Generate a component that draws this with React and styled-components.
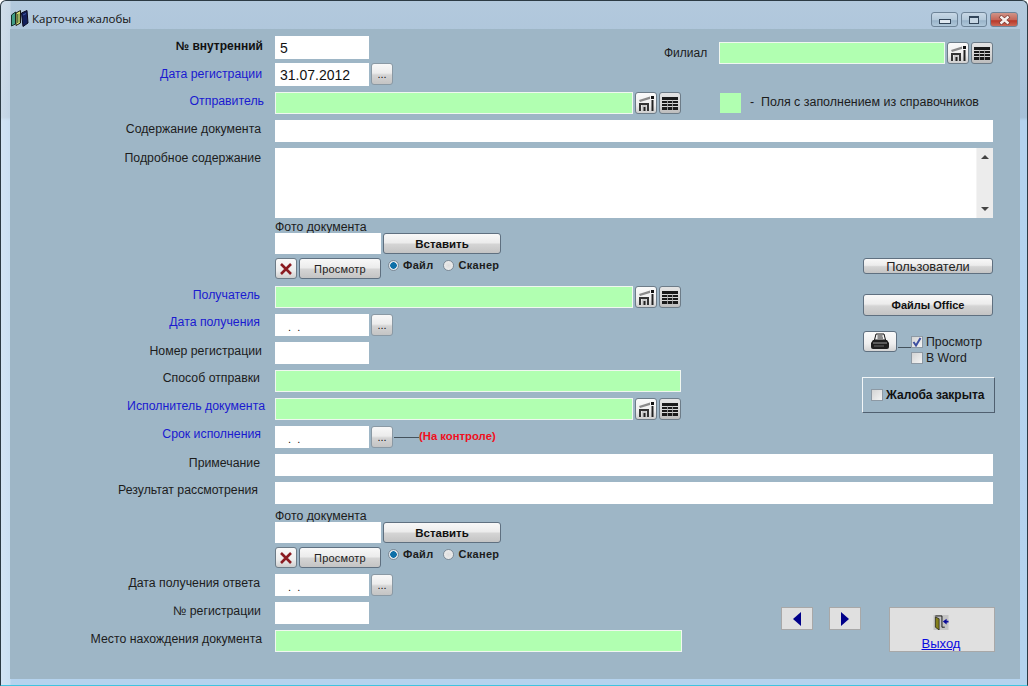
import React from "react";
import styled, { createGlobalStyle } from "styled-components";

const GlobalStyle = createGlobalStyle`
  html, body {
    margin: 0;
    padding: 0;
    background: #ffffff;
    font-family: "Liberation Sans", Arial, sans-serif;
  }
`;

const BookIcon = () => (
  <svg width="18" height="17" viewBox="0 0 18 17">
    <path d="M0.5 5 L4.5 2 L4.5 14 L0.5 16 Z" fill="#3f9c86" stroke="#14302a" strokeWidth="1" />
    <path d="M5 3 L9.5 0.5 L9.5 13 L5 15.5 Z" fill="#dfe67a" stroke="#1a1a10" strokeWidth="1" />
    <path d="M6.5 4 V13 M8 3.5 V12.5" stroke="#4a6a3a" strokeWidth="0.9" />
    <path d="M10.5 3 L16 0.5 L17 13 L12 16.5 Z" fill="#14205c" stroke="#0a0a20" strokeWidth="1" />
    <path d="M12 5 L15 3.5" stroke="#3f5aa8" strokeWidth="1" />
  </svg>
);

const HandbookIcon = () => (
  <svg width="18" height="18" viewBox="0 0 18 18">
    <path d="M2 6 L13 2.5 V5 L3 8 Z" fill="#8a8a8a" />
    <path d="M14 2 H17 V5 H14 Z" fill="#111" />
    <path d="M14.5 6 H16.5 V17 H14.5 Z" fill="#222" />
    <path d="M2 9 H12 V17 H10 V11 H4 V17 H2 Z" fill="#333" />
    <path d="M5 11 H9.5 V17 H5 Z" fill="#c8c8c8" />
    <path d="M6.5 13 H8.5 V17 H6.5 Z" fill="#222" />
  </svg>
);

const TableIcon = () => (
  <svg width="16" height="13" viewBox="0 0 16 13">
    <rect x="0" y="0" width="16" height="13" fill="#1a1a1a" />
    <path d="M0 3.5 H16 M0 6.5 H16 M0 9.5 H16" stroke="#d8d8d8" strokeWidth="1" />
    <path d="M5.5 3 V13 M10.5 3 V13" stroke="#b0b0b0" strokeWidth="0.8" />
  </svg>
);

const PrinterIcon = () => (
  <svg width="20" height="17" viewBox="0 0 20 17">
    <path d="M6 1 H14 L15.5 7 H4.5 Z" fill="#f4f4f4" stroke="#111" strokeWidth="1" />
    <path d="M7.5 3 H12.5 M7.5 5 H13" stroke="#222" strokeWidth="1" />
    <path d="M3 7 H17 L19 10 V14 Q19 16 17 16 H3 Q1 16 1 14 V10 Z" fill="#1e1e1e" />
    <path d="M3 10 H17" stroke="#999" strokeWidth="1" />
    <path d="M4 13 H14" stroke="#666" strokeWidth="1" />
  </svg>
);

const CloseCrossIcon = () => (
  <svg width="14" height="14" viewBox="0 0 14 14">
    <path d="M2 2 L12 12 M12 2 L2 12" stroke="#8b1c22" strokeWidth="2.6" />
  </svg>
);

const WindowCloseIcon = () => (
  <svg width="15" height="10" viewBox="0 0 15 10">
    <path d="M3 1 L12 9 M12 1 L3 9" stroke="#7a3a34" strokeWidth="3.8" />
    <path d="M3.5 1.5 L11.5 8.5 M11.5 1.5 L3.5 8.5" stroke="#f6f0ee" strokeWidth="2.4" />
  </svg>
);

const ExitIcon = () => (
  <svg width="16" height="16" viewBox="0 0 16 16">
    <rect x="0" y="0" width="16" height="16" fill="#c4c4c4" />
    <path d="M2 1 H9 V13 H12" fill="none" stroke="#111" strokeWidth="1" />
    <path d="M2 2 L6 4 V16 L2 13 Z" fill="#85801c" stroke="#111" strokeWidth="0.7" />
    <path d="M10 7 L14 4 V6 H16 V8 H14 V10 Z" fill="#0a0a9a" />
  </svg>
);

const CheckMark = () => (
  <svg width="10" height="10" viewBox="0 0 10 10">
    <path d="M1.5 5 L4 8.5 L8.5 1" fill="none" stroke="#3d4fa0" strokeWidth="2" />
  </svg>
);

const PhotoDoc = () => (
  <PhotoBlock>
    <PhotoCaption>Фото документа</PhotoCaption>
    <PhotoRow>
      <PhotoField />
      <InsertButton>Вставить</InsertButton>
    </PhotoRow>
    <PhotoRow $mt={4}>
      <IconButton $w={22} $h={21}>
        <CloseCrossIcon />
      </IconButton>
      <ViewButton>Просмотр</ViewButton>
      <RadioGroup>
        <Radio $on />
        <RadioText>Файл</RadioText>
        <Radio $ml={10} />
        <RadioText>Сканер</RadioText>
      </RadioGroup>
    </PhotoRow>
  </PhotoBlock>
);

const RefButtons = () => (
  <>
    <IconButton $ml={2}>
      <HandbookIcon />
    </IconButton>
    <IconButton $ml={2} $grey>
      <TableIcon />
    </IconButton>
  </>
);

const App = () => {
  return (
    <>
      <GlobalStyle />
      <Window>
        <TitleBar>
          <TitleLeft>
            <BookIcon />
            <TitleText>Карточка жалобы</TitleText>
          </TitleLeft>
          <Controls>
            <CtrlButton $w={27}>
              <MinGlyph />
            </CtrlButton>
            <CtrlButton $w={26}>
              <MaxGlyph />
            </CtrlButton>
            <CtrlButton $w={28} $close>
              <WindowCloseIcon />
            </CtrlButton>
          </Controls>
        </TitleBar>

        <Body>
          <TopBlock>
            <div>
              <Row $h={23}>
                <Label $bold $pr={12} $top={3}>
                  № внутренний
                </Label>
                <Field $w={94}>5</Field>
              </Row>
              <Row $h={23} $mt={4}>
                <Label $blue $pr={13} $top={4}>
                  Дата регистрации
                </Label>
                <Field $w={94}>31.07.2012</Field>
                <DotsButton>...</DotsButton>
              </Row>
            </div>
            <FilialRow>
              <FilialLabel>Филиал</FilialLabel>
              <Field $w={226} $green />
              <RefButtons />
            </FilialRow>
          </TopBlock>

          <Row $mt={6}>
            <Label $blue $pr={11}>
              Отправитель
            </Label>
            <Field $w={358} $green />
            <RefButtons />
            <LegendBox />
            <LegendText>-&nbsp; Поля с заполнением из справочников</LegendText>
          </Row>

          <Row $mt={6}>
            <Label $pr={14}>Содержание документа</Label>
            <Field $w={718} />
          </Row>

          <Row $h={70} $mt={6}>
            <Label $pr={14} $top={3}>
              Подробное содержание
            </Label>
            <TextArea>
              <ScrollBar>
                <ArrowUp />
                <ArrowDown />
              </ScrollBar>
            </TextArea>
          </Row>

          <MiddleBlock>
            <LeftColumn>
              <PhotoDoc />
              <Row $mt={7}>
                <Label $blue $pr={15}>
                  Получатель
                </Label>
                <Field $w={358} $green />
                <RefButtons />
              </Row>
              <Row $mt={6}>
                <Label $blue $pr={15} $top={1}>
                  Дата получения
                </Label>
                <DateField $w={94}>. &nbsp;.</DateField>
                <DotsButton>...</DotsButton>
              </Row>
              <Row $mt={6}>
                <Label $pr={13}>Номер регистрации</Label>
                <Field $w={94} />
              </Row>
              <Row $mt={6}>
                <Label $pr={15} $top={1}>
                  Способ отправки
                </Label>
                <Field $w={406} $green />
              </Row>
              <Row $mt={6}>
                <Label $blue $pr={10} $top={1}>
                  Исполнитель документа
                </Label>
                <Field $w={358} $green />
                <RefButtons />
              </Row>
              <Row $mt={6}>
                <Label $blue $pr={14} $top={1}>
                  Срок исполнения
                </Label>
                <DateField $w={94}>. &nbsp;.</DateField>
                <DotsButton>...</DotsButton>
                <ControlLine />
                <ControlNote>(На контроле)</ControlNote>
              </Row>
            </LeftColumn>

            <SideColumn>
              <UsersButton>Пользователи</UsersButton>
              <OfficeButton>Файлы Office</OfficeButton>
              <PrintRow>
                <PrintButton>
                  <PrinterIcon />
                </PrintButton>
                <ControlLine $w={13} />
                <CheckList>
                  <CheckRow>
                    <CheckBox $on>
                      <CheckMark />
                    </CheckBox>
                    Просмотр
                  </CheckRow>
                  <CheckRow>
                    <CheckBox />В Word
                  </CheckRow>
                </CheckList>
              </PrintRow>
              <ClosedBox>
                <CheckBox />
                <ClosedText>Жалоба закрыта</ClosedText>
              </ClosedBox>
            </SideColumn>
          </MiddleBlock>

          <Row $mt={6}>
            <Label $pr={15}>Примечание</Label>
            <Field $w={718} />
          </Row>
          <Row $mt={6}>
            <Label $pr={17} $top={1}>
              Результат рассмотрения
            </Label>
            <Field $w={718} />
          </Row>

          <BottomBlock>
            <LeftColumn>
              <PhotoDoc />
              <Row $mt={6}>
                <Label $pr={15}>Дата получения ответа</Label>
                <DateField $w={94}>. &nbsp;.</DateField>
                <DotsButton>...</DotsButton>
              </Row>
              <Row $mt={6}>
                <Label $pr={14}>№ регистрации</Label>
                <Field $w={94} />
              </Row>
              <Row $mt={6}>
                <Label $pr={13}>Место нахождения документа</Label>
                <Field $w={407} $green />
              </Row>
            </LeftColumn>
            <NavColumn>
              <NavButton>
                <ArrowLeft />
              </NavButton>
              <NavButton>
                <ArrowRight />
              </NavButton>
              <ExitButton>
                <ExitIcon />
                <ExitText>Выход</ExitText>
              </ExitButton>
            </NavColumn>
          </BottomBlock>
        </Body>
      </Window>
    </>
  );
};

export default App;

const Window = styled.div`
  width: 1028px;
  height: 686px;
  box-sizing: border-box;
  display: flex;
  flex-direction: column;
  padding: 0 7px 6px 9px;
  border: 1px solid #2c3a44;
  border-bottom-color: #3fc4e0;
  border-radius: 6px 6px 0 0;
  background: linear-gradient(
      90deg,
      rgba(255, 255, 255, 0.4) 0,
      rgba(255, 255, 255, 0.3) 9px,
      transparent 10px
    ),
    linear-gradient(180deg, #b3c9dd 0%, #a6c0d8 17%, #b4d2ee 17.5%, #b5d3ee 100%);
  overflow: hidden;
`;

const TitleBar = styled.div`
  height: 28px;
  flex: none;
  display: flex;
  align-items: flex-start;
  justify-content: space-between;
`;

const TitleLeft = styled.div`
  display: flex;
  align-items: center;
  gap: 3px;
  padding: 9px 0 0 1px;
`;

const TitleText = styled.span`
  font-family: "Open Sans", sans-serif;
  font-size: 11.5px;
  color: #111;
`;

const Controls = styled.div`
  display: flex;
  gap: 3px;
  padding: 11px 0 0 0;
  margin-right: 2px;
`;

const CtrlButton = styled.div`
  width: ${(p) => p.$w}px;
  height: 15px;
  box-sizing: border-box;
  display: flex;
  align-items: center;
  justify-content: center;
  border: 1px solid #6d8397;
  border-radius: 3px;
  background: ${(p) =>
    p.$close
      ? "linear-gradient(180deg, #d09488 0%, #c5685a 50%, #b8382a 60%, #cc6a58 100%)"
      : "linear-gradient(180deg, #c8d8e6 0%, #b4c9da 50%, #9ab4ca 60%, #b0c8da 100%)"};
`;

const MinGlyph = styled.div`
  width: 10px;
  height: 3px;
  margin-top: 4px;
  border: 1px solid #33465a;
  background: #dfe8f0;
`;

const MaxGlyph = styled.div`
  width: 8px;
  height: 5px;
  border: 1px solid #33465a;
  border-top-width: 2px;
  background: #c6d6e4;
`;

const Body = styled.div`
  flex: 1;
  background: #9eb6c6;
  padding-top: 7px;
  min-height: 0;
`;

const TopBlock = styled.div`
  display: flex;
  align-items: flex-start;
`;

const Row = styled.div`
  display: flex;
  align-items: flex-start;
  height: ${(p) => p.$h || 22}px;
  margin-top: ${(p) => p.$mt || 0}px;
`;

const Label = styled.div`
  flex: none;
  box-sizing: border-box;
  width: 265px;
  padding-right: ${(p) => p.$pr || 14}px;
  padding-top: ${(p) => p.$top ?? 2}px;
  text-align: right;
  font-size: ${(p) => (p.$bold ? 12 : 12.3)}px;
  line-height: 14px;
  font-weight: ${(p) => (p.$bold ? 700 : 400)};
  color: ${(p) => (p.$blue ? "#1a1ad0" : p.$bold ? "#111" : "#1c1c1c")};
  white-space: nowrap;
`;

const Field = styled.div`
  flex: none;
  box-sizing: border-box;
  width: ${(p) => p.$w}px;
  height: 100%;
  padding: 2px 0 0 4px;
  font-size: 14px;
  line-height: 18px;
  color: #111;
  background: ${(p) => (p.$green ? "#b1ffb1" : "#ffffff")};
  border: 1px solid ${(p) => (p.$green ? "#f0f7f0" : "#ffffff")};
`;

const DateField = styled(Field)`
  padding: 3px 0 0 12px;
  font-size: 11px;
`;

const TextArea = styled.div`
  flex: none;
  box-sizing: border-box;
  width: 718px;
  height: 70px;
  display: flex;
  justify-content: flex-end;
  background: #ffffff;
`;

const ScrollBar = styled.div`
  width: 17px;
  height: 100%;
  box-sizing: border-box;
  display: flex;
  flex-direction: column;
  justify-content: space-between;
  align-items: center;
  padding: 7px 0;
  background: #ececec;
  border-left: 1px solid #f4f4f4;
`;

const ArrowUp = styled.div`
  width: 0;
  height: 0;
  border-left: 4px solid transparent;
  border-right: 4px solid transparent;
  border-bottom: 4px solid #444;
`;

const ArrowDown = styled.div`
  width: 0;
  height: 0;
  border-left: 4px solid transparent;
  border-right: 4px solid transparent;
  border-top: 4px solid #444;
`;

const aeroButton = `
  box-sizing: border-box;
  padding: 0;
  display: flex;
  align-items: center;
  justify-content: center;
  border: 1px solid #5f7080;
  border-radius: 3px;
  background: linear-gradient(180deg, #f8f8f8 0%, #ececec 45%, #d4d4d4 55%, #c4c4c4 100%);
  color: #111;
  font-family: "Liberation Sans", Arial, sans-serif;
`;

const IconButton = styled.div`
  ${aeroButton}
  flex: none;
  width: ${(p) => p.$w || 22}px;
  height: ${(p) => p.$h || 22}px;
  margin-left: ${(p) => p.$ml || 0}px;
  background: ${(p) =>
    p.$grey
      ? "linear-gradient(180deg, #e4e4e4 0%, #d4d4d4 60%, #bcbcbc 100%)"
      : "linear-gradient(180deg, #fafafa 0%, #eeeeee 60%, #cfcfcf 100%)"};
  border-color: #6d7c88;
`;

const DotsButton = styled.div`
  ${aeroButton}
  flex: none;
  width: 22px;
  height: 22px;
  margin-left: 2px;
  font-size: 11px;
  line-height: 22px;
  border-color: #8a99a4;
`;

const FilialRow = styled.div`
  display: flex;
  align-items: flex-start;
  height: 22px;
  margin: 6px 0 0 271px;
`;

const FilialLabel = styled.div`
  width: 43px;
  margin-right: 12px;
  padding-top: 4px;
  font-size: 12px;
  line-height: 14px;
  color: #1c1c1c;
`;

const LegendBox = styled.div`
  flex: none;
  width: 21px;
  height: 20px;
  margin: 1px 0 0 39px;
  background: #b1ffb1;
`;

const LegendText = styled.div`
  margin-left: 9px;
  padding-top: 3px;
  font-size: 12.45px;
  line-height: 14px;
  color: #1c1c1c;
  white-space: nowrap;
`;

const MiddleBlock = styled.div`
  display: flex;
  align-items: flex-start;
`;

const LeftColumn = styled.div`
  flex: none;
  display: flex;
  flex-direction: column;
`;

const PhotoBlock = styled.div`
  margin: 2px 0 0 265px;
`;

const PhotoCaption = styled.div`
  height: 13px;
  font-size: 12.3px;
  line-height: 14px;
  color: #1c1c1c;
  white-space: nowrap;
`;

const PhotoRow = styled.div`
  display: flex;
  align-items: flex-start;
  margin-top: ${(p) => p.$mt || 0}px;
`;

const PhotoField = styled.div`
  width: 106px;
  height: 21px;
  background: #ffffff;
`;

const InsertButton = styled.div`
  ${aeroButton}
  width: 118px;
  height: 21px;
  margin-left: 2px;
  font-size: 11.5px;
  font-weight: 700;
`;

const ViewButton = styled.div`
  ${aeroButton}
  width: 82px;
  height: 21px;
  margin-left: 2px;
  font-size: 11px;
  letter-spacing: 0.2px;
  color: #222;
`;

const RadioGroup = styled.div`
  display: flex;
  align-items: center;
  height: 14px;
  margin-left: 7px;
`;

const Radio = styled.div`
  box-sizing: border-box;
  width: 11px;
  height: 11px;
  margin-left: ${(p) => p.$ml || 0}px;
  border-radius: 50%;
  border: 1px solid #7d8a96;
  background: ${(p) =>
    p.$on
      ? "radial-gradient(circle, #0d6fa8 0 3px, #dfe6ec 3.5px)"
      : "radial-gradient(circle, #dddddd, #f2f2f2)"};
`;

const RadioText = styled.span`
  margin-left: 4px;
  font-size: 11px;
  font-weight: 700;
  letter-spacing: 0.3px;
  color: #1c1c1c;
`;

const ControlLine = styled.div`
  flex: none;
  align-self: center;
  width: ${(p) => p.$w || 25}px;
  height: 1px;
  margin-left: 1px;
  background: #44525c;
`;

const ControlNote = styled.div`
  padding-top: 3px;
  font-size: 11.3px;
  line-height: 14px;
  font-weight: 700;
  color: #f01020;
  white-space: nowrap;
`;

const SideColumn = styled.div`
  flex: none;
  display: flex;
  flex-direction: column;
  margin-left: 181px;
  padding-top: 40px;
`;

const UsersButton = styled.div`
  ${aeroButton}
  width: 130px;
  height: 16px;
  margin-left: 1px;
  font-size: 12.8px;
  color: #222;
`;

const OfficeButton = styled.div`
  ${aeroButton}
  width: 130px;
  height: 22px;
  margin: 20px 0 0 1px;
  font-size: 11px;
  font-weight: 700;
`;

const PrintRow = styled.div`
  display: flex;
  align-items: flex-start;
  margin: 15px 0 0 1px;
`;

const PrintButton = styled.div`
  ${aeroButton}
  flex: none;
  width: 34px;
  height: 21px;
  background: linear-gradient(180deg, #fafafa 0%, #eeeeee 60%, #d4d4d4 100%);
`;

const CheckList = styled.div`
  display: flex;
  flex-direction: column;
  gap: 3px;
  margin-top: 4px;
`;

const CheckRow = styled.div`
  display: flex;
  align-items: center;
  gap: 3px;
  height: 13px;
  font-size: 12.3px;
  color: #1c1c1c;
  white-space: nowrap;
`;

const CheckBox = styled.div`
  flex: none;
  box-sizing: border-box;
  width: 12px;
  height: 12px;
  display: flex;
  align-items: center;
  justify-content: center;
  border: 1px solid #8d99a4;
  background: linear-gradient(135deg, #d4d4d4 0%, #f4f4f4 100%);
`;

const ClosedBox = styled.div`
  box-sizing: border-box;
  display: flex;
  align-items: center;
  gap: 3px;
  width: 133px;
  height: 36px;
  margin-top: 13px;
  padding-left: 8px;
  border: 1px solid;
  border-color: #f2f6f8 #506070 #506070 #f2f6f8;
`;

const ClosedText = styled.span`
  font-size: 12px;
  font-weight: 700;
  color: #111;
  white-space: nowrap;
`;

const BottomBlock = styled.div`
  display: flex;
  align-items: flex-start;
  margin-top: 3px;
`;

const NavColumn = styled.div`
  flex: none;
  display: flex;
  align-items: flex-start;
  margin-left: 99px;
  padding-top: 100px;
`;

const NavButton = styled.div`
  box-sizing: border-box;
  width: 32px;
  height: 23px;
  margin-right: 16px;
  display: flex;
  align-items: center;
  justify-content: center;
  background: #e0e0e0;
  border: 1px solid #a8a8a8;
`;

const ArrowLeft = styled.div`
  width: 0;
  height: 0;
  border-top: 7px solid transparent;
  border-bottom: 7px solid transparent;
  border-right: 8px solid #00008a;
`;

const ArrowRight = styled.div`
  width: 0;
  height: 0;
  border-top: 7px solid transparent;
  border-bottom: 7px solid transparent;
  border-left: 8px solid #00008a;
`;

const ExitButton = styled.div`
  box-sizing: border-box;
  width: 106px;
  height: 45px;
  margin-left: 12px;
  display: flex;
  flex-direction: column;
  align-items: center;
  padding: 7px 2px 0 0;
  background: #e0e0e0;
  border: 1px solid #a8a8a8;
`;

const ExitText = styled.a`
  margin-top: 7px;
  font-size: 13px;
  line-height: 14px;
  color: #0a0ae0;
  text-decoration: underline;
`;
